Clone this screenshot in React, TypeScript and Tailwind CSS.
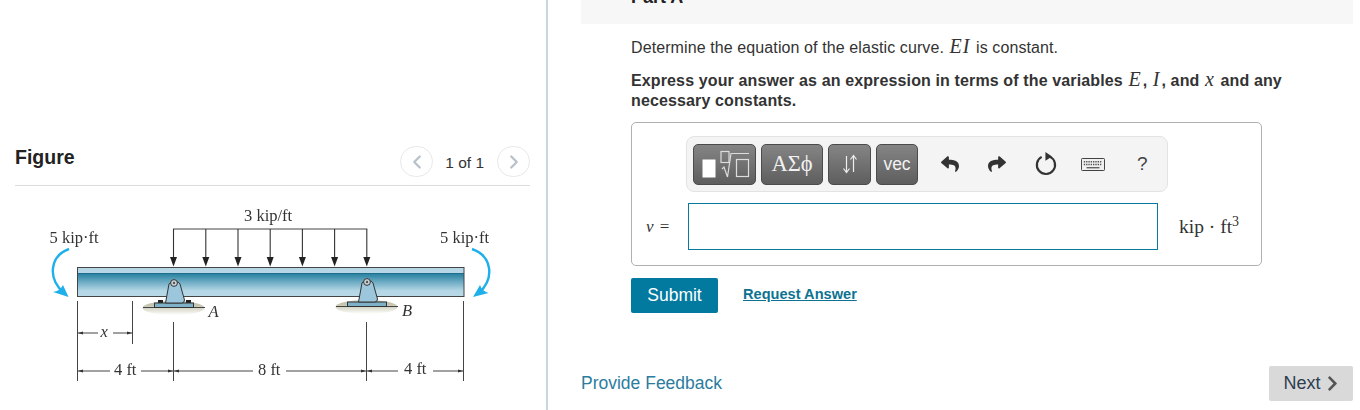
import { ChevronLeft, ChevronRight } from 'lucide-react';
import { FaChevronRight, FaReply, FaShare } from 'react-icons/fa';

const LOAD_ARROWS = [173.5, 205.8, 238, 270.2, 302.4, 334.6, 366.8];

const DimText = ({ x, y, children, italic }: { x: number; y: number; children: string; italic?: boolean }) => (
  <text x={x} y={y} fontSize={16.5} fontStyle={italic ? 'italic' : 'normal'} fill="#333" fontFamily="'Liberation Serif', serif">
    {children}
  </text>
);

const Support = ({ cx, base, bolts, id }: { cx: number; base: number; bolts?: boolean; id: string }) => (
  <g>
    <ellipse cx={cx} cy={base + 5} rx={31} ry={7} fill={`url(#${id})`} />
    <line x1={cx - 30.5} x2={cx + 31.5} y1={base + 4.5} y2={base + 4.5} stroke="#444" strokeWidth={1} />
    {bolts && (
      <>
        <rect x={cx - 15.5} y={base - 3} width={5} height={4} fill="#222" />
        <rect x={cx + 12.5} y={base - 3} width={5} height={4} fill="#222" />
      </>
    )}
    <rect x={cx - 19} y={base} width={39} height={4.5} fill="#7fb2c9" stroke="#333" strokeWidth={1} />
    <path
      d={`M${cx - 8} ${base} L${cx - 4.5} ${base - 19} A6.5 6.5 0 0 1 ${cx + 6.5} ${base - 19} L${cx + 11} ${base - 3} Q${cx + 11} ${base} ${cx + 8} ${base} Z`}
      fill="#9cc6dc"
      stroke="#333"
      strokeWidth={1}
    />
    <circle cx={cx + 0.5} cy={base - 20} r={3.4} fill="#c9d2d6" stroke="#333" strokeWidth={1} />
    <circle cx={cx + 0.5} cy={base - 20} r={1.2} fill="#555" />
  </g>
);

const BeamFigure = () => (
  <svg viewBox="0 190 547 220" className="block h-[220px] w-[547px] blur-[0.35px]">
    <defs>
      <linearGradient id="web" x1="0" x2="0" y1="0" y2="1">
        <stop offset="0" stopColor="#25809f" />
        <stop offset="0.35" stopColor="#6aa9c2" />
        <stop offset="0.75" stopColor="#b4d6e5" />
        <stop offset="1" stopColor="#b9d9e7" />
      </linearGradient>
      <linearGradient id="groundA" x1="0" x2="0" y1="0" y2="1">
        <stop offset="0.3" stopColor="#c4c4ae" />
        <stop offset="1" stopColor="#ffffff" />
      </linearGradient>
      <linearGradient id="groundB" x1="0" x2="0" y1="0" y2="1">
        <stop offset="0.3" stopColor="#c4c4ae" />
        <stop offset="1" stopColor="#ffffff" />
      </linearGradient>
    </defs>

    <DimText x={244} y={221}>3 kip/ft</DimText>
    <DimText x={49.5} y={243}>5 kip·ft</DimText>
    <DimText x={440} y={243}>5 kip·ft</DimText>

    <line x1={173} x2={367.3} y1={229} y2={229} stroke="#444" strokeWidth={1} />
    {LOAD_ARROWS.map((x) => (
      <g key={x}>
        <line x1={x} x2={x} y1={229} y2={260} stroke="#333" strokeWidth={1.1} />
        <path d={`M${x - 3.5} 257 L${x + 3.5} 257 L${x} 266.5 Z`} fill="#222" />
      </g>
    ))}

    <rect x={77.5} y={267.5} width={386.5} height={6} fill="#b7d7e6" />
    <rect x={77.5} y={273.5} width={386.5} height={23} fill="url(#web)" />
    <line x1={77.5} x2={464} y1={273.5} y2={273.5} stroke="#1f6f8c" strokeWidth={1} />
    <rect x={77.5} y={267.5} width={386.5} height={29} fill="none" stroke="#444" strokeWidth={1} />

    <Support cx={173.5} base={303} bolts id="groundA" />
    <Support cx={366.5} base={302} id="groundB" />
    <DimText x={208.5} y={317} italic>A</DimText>
    <DimText x={402} y={316} italic>B</DimText>

    <path d="M69 249 C50 256 47 278 64 293" fill="none" stroke="#1fb0ea" strokeWidth={2.4} />
    <path d="M68.5 297 L53 292 Q60 291 63 285 Z" fill="#1fb0ea" />
    <path d="M472 249 C492 256 495 278 479 293" fill="none" stroke="#1fb0ea" strokeWidth={2.4} />
    <path d="M473 297 L488.5 293 Q482 291 480 285 Z" fill="#1fb0ea" />

    <g stroke="#444" strokeWidth={1}>
      <line x1={77.5} x2={77.5} y1={301} y2={381} />
      <line x1={132.5} x2={132.5} y1={301} y2={344} />
      <line x1={173.5} x2={173.5} y1={322} y2={381} />
      <line x1={366.5} x2={366.5} y1={322} y2={381} />
      <line x1={463.5} x2={463.5} y1={301} y2={381} />
      <line x1={78} x2={98} y1={333} y2={333} />
      <line x1={113} x2={132} y1={333} y2={333} />
      <line x1={78} x2={110} y1={371} y2={371} />
      <line x1={141} x2={173} y1={371} y2={371} />
      <line x1={174} x2={253} y1={371} y2={371} />
      <line x1={286} x2={366} y1={371} y2={371} />
      <line x1={367} x2={398} y1={371} y2={371} />
      <line x1={433} x2={463} y1={371} y2={371} />
    </g>
    <g fill="#333">
      <path d="M78 333 l5 -1.6 v3.2 Z" />
      <path d="M132 333 l-5 -1.6 v3.2 Z" />
      <path d="M78 371 l5 -1.6 v3.2 Z" />
      <path d="M173 371 l-5 -1.6 v3.2 Z" />
      <path d="M174 371 l5 -1.6 v3.2 Z" />
      <path d="M366 371 l-5 -1.6 v3.2 Z" />
      <path d="M367 371 l5 -1.6 v3.2 Z" />
      <path d="M463 371 l-5 -1.6 v3.2 Z" />
    </g>
    <DimText x={100.5} y={337} italic>x</DimText>
    <DimText x={114} y={375}>4 ft</DimText>
    <DimText x={258} y={375}>8 ft</DimText>
    <DimText x={404} y={374}>4 ft</DimText>
  </svg>
);

const MathVar = ({ children }: { children: string }) => (
  <span className="px-[1px] font-['Liberation_Serif',serif] text-[20px] leading-none font-normal tracking-[1px] italic">{children}</span>
);

const ToolButton = ({ className, children }: { className: string; children: React.ReactNode }) => (
  <div className={`flex h-[41px] items-center justify-center rounded-[5px] border border-[#4c4c4c] bg-gradient-to-b from-[#858585] to-[#5e5e5e] text-[#f2f2f2] ${className}`}>
    {children}
  </div>
);

const Toolbar = () => (
  <div className="ml-[54px] flex h-[56px] w-[482px] items-center rounded-[8px] border border-[#e3e3e3] bg-[#f4f4f4] pl-[6px]">
    <ToolButton className="w-[63px]">
      <svg width="52" height="34" viewBox="0 0 52 34">
        <rect x="3.5" y="12.5" width="13" height="18" fill="#fff" />
        <rect x="22" y="4.5" width="8" height="11" fill="none" stroke="#ddd" strokeWidth="1.2" />
        <path d="M23 22 L25 20 L28.5 30 L32 6.5 H50" fill="none" stroke="#ddd" strokeWidth="1.2" />
        <rect x="37.5" y="12.5" width="12" height="17" fill="none" stroke="#ddd" strokeWidth="1.2" />
      </svg>
    </ToolButton>
    <ToolButton className="ml-[5px] w-[62px] font-['Liberation_Serif',serif] text-[22.5px]">ΑΣϕ</ToolButton>
    <ToolButton className="ml-[5px] w-[43px]">
      <svg width="18" height="20" viewBox="0 0 18 20" fill="none" stroke="#eee" strokeWidth="1.2">
        <path d="M5.5 2 V18 M2.5 14.5 L5.5 18.5 L8.5 14.5" />
        <path d="M12.5 18 V2 M9.5 5.5 L12.5 1.5 L15.5 5.5" />
      </svg>
    </ToolButton>
    <ToolButton className="ml-[5px] w-[42px] text-[17.5px]">vec</ToolButton>
    <div className="ml-[22px] flex w-[20px] justify-center text-[#333]"><FaReply size={18} /></div>
    <div className="ml-[27px] flex w-[20px] justify-center text-[#333]"><FaShare size={18} /></div>
    <svg className="ml-[27px]" width="24" height="26" viewBox="0 0 22 24" fill="none">
      <path d="M14.5 5.2 A8.4 8.4 0 1 1 7 5.4" stroke="#333" strokeWidth="2" />
      <path d="M10.5 1 L16.5 5 L10.5 9 Z" fill="#333" />
    </svg>
    <svg className="ml-[23px]" width="24" height="15" viewBox="0 0 26 16" fill="none">
      <rect x="0.5" y="1.5" width="25" height="13" rx="1" fill="#f0f0f0" stroke="#333" />
      <path d="M3 5 H23 M3 8 H23" stroke="#555" strokeWidth="1.4" strokeDasharray="1.5 1" />
      <path d="M6 11.5 H20" stroke="#555" strokeWidth="1.4" />
    </svg>
    <span className="ml-[32px] text-[19px] text-[#444]">?</span>
  </div>
);

export default function App() {
  return (
    <div className="flex h-[410px] w-[1360px] overflow-hidden bg-white font-['Liberation_Sans',Arial,sans-serif] text-[#333]">
      <div className="h-full w-[548px] shrink-0 border-r-2 border-[#c9d6e2]">
        <div className="mt-[137px] ml-[15px] flex h-[49px] w-[515px] items-center justify-between border-b border-[#dcdcdc]">
          <span className="-mt-[6px] text-[19.5px] font-bold text-[#222]">Figure</span>
          <div className="mt-[1px] flex items-center">
            <div className="flex h-[31px] w-[33px] items-center justify-center rounded-full border border-[#e8e8e8] text-[#b8c0c8]">
              <ChevronLeft size={22} strokeWidth={2.5} />
            </div>
            <span className="mt-[2px] mr-[13px] ml-[12px] text-[15.5px] text-[#333]">1 of 1</span>
            <div className="flex h-[31px] w-[33px] items-center justify-center rounded-full border border-[#e8e8e8] text-[#b8c0c8]">
              <ChevronRight size={22} strokeWidth={2.5} />
            </div>
          </div>
        </div>
        <div className="mt-[4px]">
          <BeamFigure />
        </div>
      </div>

      <div className="flex h-full w-[805px] flex-col pl-[33px]">
        <div className="flex h-[24px] items-end overflow-hidden bg-[#f7f7f7] pl-[50px]">
          <span className="mb-[13px] text-[18px] font-bold text-[#222]">Part A</span>
        </div>
        <div className="ml-[50px] w-[660px]">
          <p className="mt-[12px] h-[21px] text-[16px] leading-[21px] tracking-[0.1px] text-[#333]">
            Determine the equation of the elastic curve. <MathVar>EI</MathVar> is constant.
          </p>
          <p className="mt-[12px] text-[16px] leading-[20px] font-bold tracking-[0.13px] text-[#333]">
            Express your answer as an expression in terms of the variables <MathVar>E</MathVar>, <MathVar>I</MathVar>, and <MathVar>x</MathVar> and any necessary constants.
          </p>
          <div className="mt-[11px] h-[144px] w-[631px] rounded-[5px] border border-[#b0b0b0] pt-[13px]">
            <Toolbar />
            <div className="mt-[11px] flex items-center pl-[14px]">
              <span className="w-[42px] font-['Liberation_Serif',serif] text-[17px] tracking-[1px] text-[#333]"><i>v</i> =</span>
              <div className="h-[47px] w-[470px] border border-[#0a7a9c] bg-white" />
              <span className="ml-[21px] font-['Liberation_Serif',serif] text-[19.5px] text-[#333]">
                kip · ft<sup className="text-[14px]">3</sup>
              </span>
            </div>
          </div>
          <div className="mt-[12px] flex items-center">
            <button className="h-[35px] w-[87px] rounded-[2px] bg-[#027a9f] text-[17.5px] text-white">Submit</button>
            <a className="-mt-[1px] ml-[25px] text-[14.6px] font-bold text-[#0d7391] underline">Request Answer</a>
          </div>
        </div>
        <div className="mt-[53px] flex items-center justify-between">
          <a className="text-[17.5px] text-[#2b7ca0]">Provide Feedback</a>
          <div className="flex h-[35px] w-[84px] items-center justify-center gap-[3px] rounded-[2px] bg-[#d9d9d9] pl-[2px] text-[18px] text-[#2d3e50]">
            Next <FaChevronRight size={17} className="text-[#555]" />
          </div>
        </div>
      </div>
    </div>
  );
}
